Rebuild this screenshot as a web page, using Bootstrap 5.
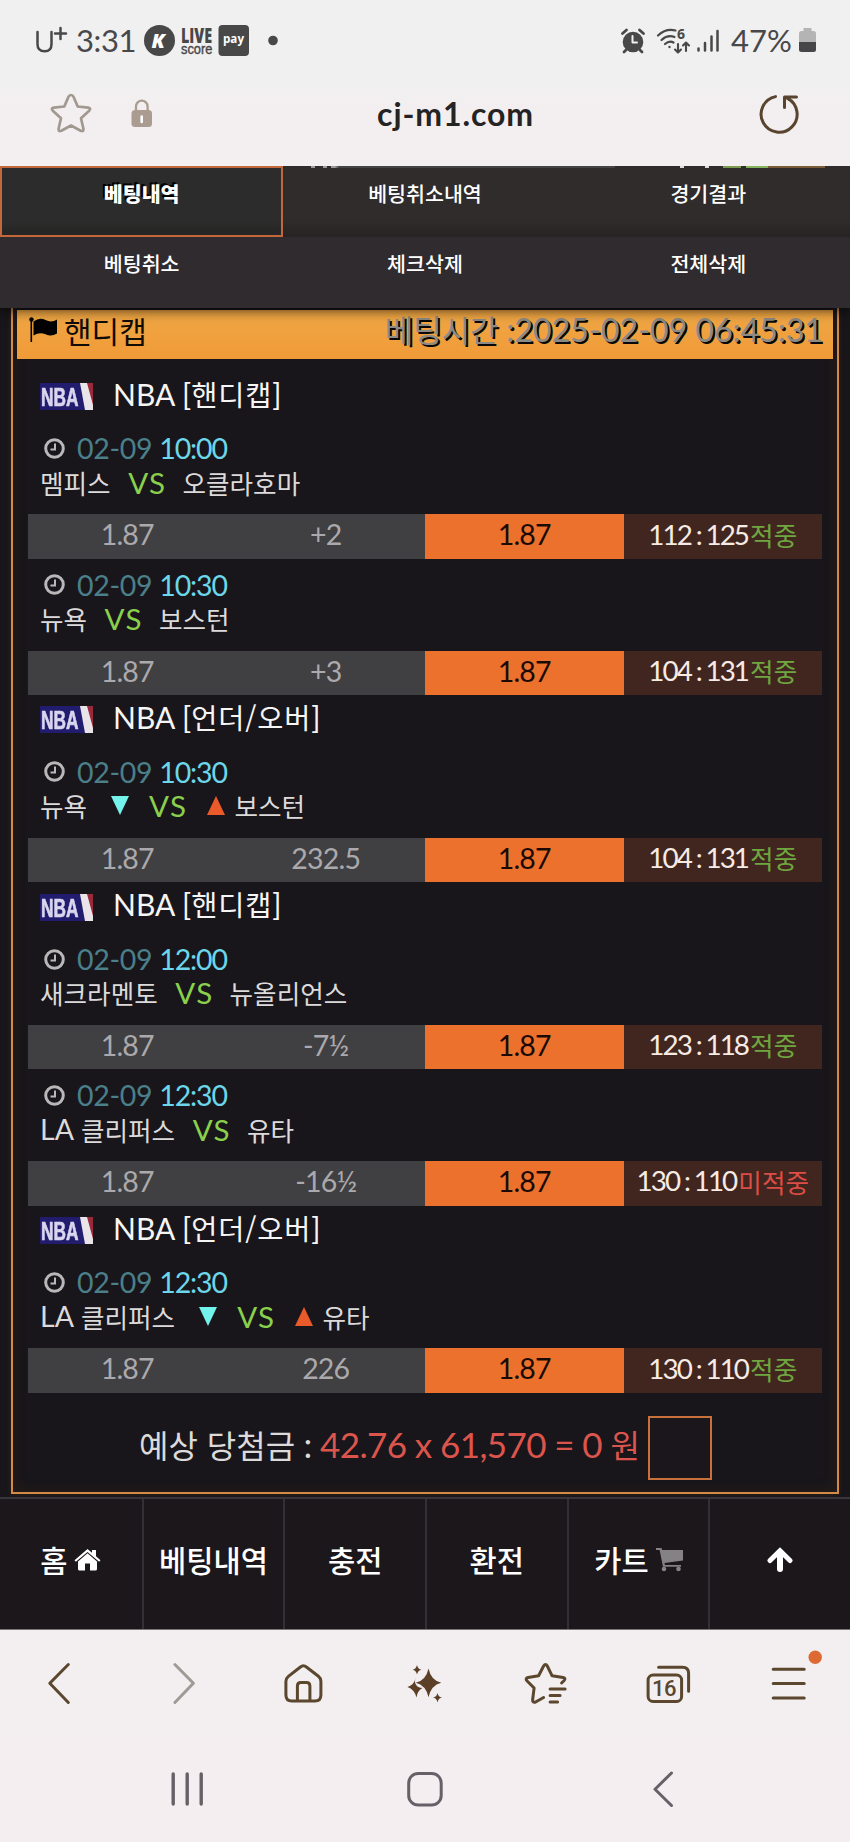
<!DOCTYPE html>
<html lang="ko">
<head>
<meta charset="utf-8">
<meta name="viewport" content="width=device-width, initial-scale=1">
<title>베팅내역</title>
<link href="https://cdn.jsdelivr.net/npm/bootstrap@5.3.0/dist/css/bootstrap.min.css" rel="stylesheet">
<style>
body{font-family:Lato,"Noto Sans CJK KR",sans-serif;background:#18161a;color:#ddd;width:850px;height:1842px;overflow:hidden;line-height:1;white-space:nowrap}
svg{display:block;flex:none}
.ko{font-family:"Noto Sans CJK KR",sans-serif}
.status{height:80px;background:#f0f0f0;color:#48484a;font-size:31px;padding-left:35px}
.status .clock{width:65px;margin-left:8px;letter-spacing:-.4px}
.urlbar{height:86px;background:linear-gradient(#f0f0f0,#f3eff0 30%);padding-bottom:18px;padding-left:45px}
.urlbar .host{font-size:32px;font-weight:700;color:#252324;letter-spacing:.9px}
.tabs{height:142px;background:#302b2f;box-shadow:0 2px 12px rgba(0,0,0,.75);clip-path:inset(0 0 -20px 0);z-index:2}
.tabs .cell{height:71px;font-size:20.6px;font-weight:500;color:#fff;line-height:29px;padding-top:12px}
.tabs .top{background:linear-gradient(#2f2c2b 75%,#272324);padding-top:13px}
.tabs .on{background:linear-gradient(#2b2c2b 80%,#262424);border:2px solid #c2683a;font-weight:900;text-shadow:-2px -2px 0 #000;padding-top:11px}
.peek{top:0;left:285px;width:565px;height:2px;background:linear-gradient(90deg,transparent 26px,#999 26px 30px,transparent 30px 38px,#999 38px 42px,transparent 42px 46px,#999 46px 50px,#444 54px 330px,transparent 330px 395px,#ddd 395px 399px,transparent 399px 420px,#ddd 420px 424px,transparent 424px 438px,#7b9b50 438px 456px,transparent 456px 461px,#83b45c 461px 483px,#7b5c38 483px 540px,transparent 540px)}
.slip{margin:-10px 11px 0;border:2px solid #d18a48;height:1196px;padding:10px 4px 0;box-shadow:inset 0 0 14px rgba(120,60,10,.18),0 0 5px rgba(120,60,10,.3)}
.slip-head{height:49px;background:linear-gradient(#f0a845,#f09a38);color:#120c06;padding:0 10px 10px 12px}
.slip-head .name{font-size:30px;margin-left:6px}
.slip-head .when{color:#8d8a85;text-shadow:2px 2px 0 #080808;font-size:32.5px;letter-spacing:-.2px}
.when .ko{font-size:31px}
.games{padding:12.6px 11px 0}
.league{height:51px;padding:0 0 7px 12px;color:#f6f5f6;font-size:30px}
.league svg{position:relative;top:3px}
.league .title{margin-left:20px}
.league .ko{font-size:28.4px;letter-spacing:.9px}
.game{height:136.2px;padding-top:9.500px;font-size:28.5px}
.game .date{height:33px;padding-left:16px;color:#4b7f89;letter-spacing:-.3px}
.date b{font-weight:400;color:#6cd6ea;margin-left:7px;letter-spacing:-1.1px}
.date svg{margin-right:12px}
.game .teams{height:33px;margin-top:1px;padding-left:12px;color:#dcdadb;font-size:25.6px;font-family:"Noto Sans CJK KR",sans-serif}
.teams i{font:400 29.5px/1 Lato,sans-serif;color:#8ad04d;margin:0 16px 0 17.5px;letter-spacing:1.4px}
.teams .en{font:400 28.5px/1 Lato,sans-serif;margin-right:7px}
.down{margin-left:24px;margin-right:2.5px}
.up{margin-left:4px;margin-right:9px}
.odds{height:44.4px;margin-top:15.3px;background:#403f42;color:#aba9ac;letter-spacing:-.8px}
.odds > div{width:25%;padding-bottom:4px}
.odds .pick{background:#ec712d;color:#1b0a04}
.odds .score{background:#41261f;color:#f6ebe5;font-size:27.8px;letter-spacing:-1.9px;word-spacing:-.5px}
.score .ko{font-size:25.6px;letter-spacing:0;margin-left:2px}
.hit{color:#6fa63f}.miss{color:#dc4d46}
.total{height:108px;font-size:35px;padding-left:122px;padding-bottom:5px;color:#dcdadb;letter-spacing:-.6px}
.total .ko{font-size:32px;letter-spacing:0}
.total .sum{color:#dc554d;letter-spacing:-.6px}
.total .box{width:64px;height:64px;border:2px solid #c9713d;background:#1a161b;margin:7px 0 0 8px}
.dock{height:133px;margin-top:3px;border-top:2px solid #38363a;border-bottom:1px solid #777;background:#1b171b;font-size:29.6px;font-weight:500;color:#fff}
.dock > div{width:16.6667%;padding-bottom:8px;gap:7px}
.dock > div:not(:first-child){border-left:2px solid #323034}
.toolbar{height:105px;background:#f3eff1}
.toolbar svg{overflow:visible}
.toolbar > div{width:14.2857%}
.sysnav{height:108px;background:#f4eef1;padding:0 68px}
.sysnav > div{width:33.333%}
.ln{fill:none;stroke-linecap:round;stroke-linejoin:round}
</style>
</head>
<body>
<svg width="0" height="0" class="position-absolute">
  <defs>
    <filter id="soft"><feGaussianBlur stdDeviation=".6"/></filter>
    <g id="nba">
      <rect width="53" height="27" fill="#211c6e"/>
      <g filter="url(#soft)">
        <path d="M40 0h13v27h-8z" fill="#e9e3ea"/><path d="M47 0h6v22z" fill="#9a2b3a"/>
        <text transform="translate(1 23) scale(.72 1)" textLength="52" lengthAdjust="spacingAndGlyphs" font-family="Liberation Sans" font-weight="700" font-size="25" fill="#d9d6ee" stroke="#d9d6ee" stroke-width=".7">NBA</text>
      </g>
    </g>
    <g id="clk" fill="none" stroke="#b9b8b9"><circle cx="10.5" cy="10.5" r="8.8" stroke-width="3"/><path d="M11 5.5v6H6.500" stroke-width="2"/></g>
  </defs>
</svg>

<header>
  <div class="status d-flex align-items-center">
    <svg width="33" height="34" viewBox="35 22 33 34" class="ln" stroke="#48484a"><path d="M37.500 31v12c0 5 3 7.300 7.200 7.300s6.800-2.300 6.800-7.300V31M60.500 27v11M55 32.500h11" stroke-width="2.500"/></svg>
    <span class="clock">3:31</span>
    <svg width="140" height="48" viewBox="141 15 140 48">
      <circle cx="159.500" cy="39.500" r="15.500" fill="#484849"/>
      <text x="151.500" y="46.500" font-family="Open Sans" font-weight="800" font-style="italic" font-size="20" fill="#fff">K</text>
      <text transform="translate(181 41.500) scale(.65 1)" textLength="48" lengthAdjust="spacingAndGlyphs" font-family="Open Sans" font-weight="800" font-size="21.500" fill="#484849">LIVE</text>
      <text transform="translate(181 52.500) scale(.92 1)" textLength="34" lengthAdjust="spacingAndGlyphs" font-family="Liberation Sans" font-size="14" fill="#484849" stroke="#484849" stroke-width=".4">score</text>
      <rect x="218.500" y="24" width="30.500" height="31" rx="4" fill="#484849"/>
      <text x="223" y="42" textLength="21" lengthAdjust="spacingAndGlyphs" font-family="Open Sans" font-weight="700" font-size="13" fill="#fff">pay</text>
      <circle cx="273" cy="39.500" r="4.800" fill="#484849"/>
    </svg>
    <svg width="104" height="30" viewBox="619 24 104 30" class="ms-auto" fill="#484849" stroke="#484849">
      <circle cx="633" cy="41" r="10.300" stroke="none"/><path class="ln" d="M622.500 32.500l4-3.500M643.500 32.500l-4-3.500M626 49l-2 2M640 49l2 2" stroke-width="2.800"/><path class="ln" d="M632.500 35v6.500h4.500" stroke="#f0f0f0" stroke-width="2"/>
      <path class="ln" stroke-width="2.200" d="M658 34.500q8-7.500 17.500-5M661.500 39q6-5.500 13-3M665 43q4.500-4 8.500-1.500"/><circle cx="669.500" cy="46" r="1.200" stroke="none"/>
      <path class="ln" stroke-width="2.100" d="M678 43v8M675 48.500l3 3 3-3M686 50v-8M683 44.500l3-3 3 3"/>
      <text x="677" y="38" font-family="Open Sans" font-weight="700" font-size="14" stroke="none">6</text>
      <path class="ln" stroke-width="2.500" d="M698.500 47.500v2M705 42v7.500M711.500 35.500v14M717.500 30v19.500"/>
    </svg>
    <span style="margin-left:8px;width:68px">47%</span>
    <svg width="17" height="26" viewBox="0 0 17 26" style="margin-right:34px"><path d="M4.500 1h8v3h2q2.500 0 2.500 2.500V16H0V6.500Q0 4 2.500 4h2z" fill="#b5b4b5"/><path d="M0 15h17v7.500q0 2.500-2.500 2.500h-12Q0 25 0 22.500z" fill="#464547"/></svg>
  </div>
  <div class="urlbar d-flex align-items-center">
    <svg width="112" height="50" viewBox="45 89 112 50" class="ln">
      <path d="M71 95q1.700 0 2.500 1.800l4.200 9.700 10.500 1.100q3.300.6 1 3.100l-8.200 7.500 2.400 10.500q.3 3.300-2.700 2L71 125.500l-9.700 5.200q-3 1.300-2.700-2l2.400-10.500-8.200-7.500q-2.300-2.500 1-3.100l10.500-1.100 4.200-9.700Q69.300 95 71 95z" stroke="#a1998f" stroke-width="2.700"/>
      <rect x="131.500" y="110" width="20.500" height="17" rx="3.500" fill="#aa9c90"/><path d="M136 111v-4.500a5.800 5.800 0 0 1 11.600 0v4.500" stroke="#aa9c90" stroke-width="2.300"/><path d="M141.700 116.500v5.500" stroke="#fff" stroke-width="2.600"/>
    </svg>
    <span class="host mx-auto">cj-m1.com</span>
    <svg width="50" height="50" viewBox="754 88 50 50" class="ln" style="margin-right:46px" stroke="#59452f" stroke-width="3"><path d="M775.500 95.600a18 18 0 1 0 12 1.700M784.500 106.500V96h12"/></svg>
  </div>
</header>

<nav class="tabs ko position-relative">
  <div class="peek position-absolute"></div>
  <div class="row g-0 text-center">
    <div class="col-4 cell on">베팅내역</div><div class="col-4 cell top">베팅취소내역</div><div class="col-4 cell top">경기결과</div>
    <div class="col-4 cell">베팅취소</div><div class="col-4 cell">체크삭제</div><div class="col-4 cell">전체삭제</div>
  </div>
</nav>

<main class="slip">
  <div class="slip-head d-flex align-items-center">
    <svg width="29" height="26" viewBox="0 0 29 26"><circle cx="2.500" cy="2.500" r="2.200"/><path d="M1.500 2h1.600v23H1.500zM4.500 4.500q6-4.500 12-1.500t11.500-.5v14q-5.500 3.500-11.500.800t-12 1.200z"/></svg>
    <span class="name ko">핸디캡</span>
    <span class="when ms-auto"><span class="ko">베팅시간</span> :2025-02-09 06:45:31</span>
  </div>

  <div class="games">
    <div class="league d-flex align-items-center"><svg width="53" height="27"><use href="#nba"/></svg><span class="title">NBA [<span class="ko">핸디캡</span>]</span></div>
    <div class="game">
      <div class="date d-flex align-items-center"><svg width="21" height="21"><use href="#clk"/></svg>02-09<b>10:00</b></div>
      <div class="teams d-flex align-items-center">멤피스<i>VS</i>오클라호마</div>
      <div class="odds d-flex text-center align-items-stretch"><div class="d-flex align-items-center justify-content-center">1.87</div><div class="d-flex align-items-center justify-content-center">+2</div><div class="pick d-flex align-items-center justify-content-center">1.87</div><div class="score d-flex align-items-center justify-content-center">112 : 125<span class="ko hit">적중</span></div></div>
    </div>
    <div class="game">
      <div class="date d-flex align-items-center"><svg width="21" height="21"><use href="#clk"/></svg>02-09<b>10:30</b></div>
      <div class="teams d-flex align-items-center">뉴욕<i>VS</i>보스턴</div>
      <div class="odds d-flex text-center align-items-stretch"><div class="d-flex align-items-center justify-content-center">1.87</div><div class="d-flex align-items-center justify-content-center">+3</div><div class="pick d-flex align-items-center justify-content-center">1.87</div><div class="score d-flex align-items-center justify-content-center">104 : 131<span class="ko hit">적중</span></div></div>
    </div>

    <div class="league d-flex align-items-center"><svg width="53" height="27"><use href="#nba"/></svg><span class="title">NBA [<span class="ko">언더/오버</span>]</span></div>
    <div class="game">
      <div class="date d-flex align-items-center"><svg width="21" height="21"><use href="#clk"/></svg>02-09<b>10:30</b></div>
      <div class="teams d-flex align-items-center">뉴욕<svg class="down" width="18" height="19"><path d="M0 0h18L9 19z" fill="#74f2ec"/></svg><i>VS</i><svg class="up" width="18" height="19"><path d="M9 0l9 19H0z" fill="#ea5a2a"/></svg>보스턴</div>
      <div class="odds d-flex text-center align-items-stretch"><div class="d-flex align-items-center justify-content-center">1.87</div><div class="d-flex align-items-center justify-content-center">232.5</div><div class="pick d-flex align-items-center justify-content-center">1.87</div><div class="score d-flex align-items-center justify-content-center">104 : 131<span class="ko hit">적중</span></div></div>
    </div>

    <div class="league d-flex align-items-center"><svg width="53" height="27"><use href="#nba"/></svg><span class="title">NBA [<span class="ko">핸디캡</span>]</span></div>
    <div class="game">
      <div class="date d-flex align-items-center"><svg width="21" height="21"><use href="#clk"/></svg>02-09<b>12:00</b></div>
      <div class="teams d-flex align-items-center">새크라멘토<i>VS</i>뉴올리언스</div>
      <div class="odds d-flex text-center align-items-stretch"><div class="d-flex align-items-center justify-content-center">1.87</div><div class="d-flex align-items-center justify-content-center">-7½</div><div class="pick d-flex align-items-center justify-content-center">1.87</div><div class="score d-flex align-items-center justify-content-center">123 : 118<span class="ko hit">적중</span></div></div>
    </div>
    <div class="game">
      <div class="date d-flex align-items-center"><svg width="21" height="21"><use href="#clk"/></svg>02-09<b>12:30</b></div>
      <div class="teams d-flex align-items-center"><span class="en">LA</span>클리퍼스<i>VS</i>유타</div>
      <div class="odds d-flex text-center align-items-stretch"><div class="d-flex align-items-center justify-content-center">1.87</div><div class="d-flex align-items-center justify-content-center">-16½</div><div class="pick d-flex align-items-center justify-content-center">1.87</div><div class="score d-flex align-items-center justify-content-center">130 : 110<span class="ko miss">미적중</span></div></div>
    </div>

    <div class="league d-flex align-items-center"><svg width="53" height="27"><use href="#nba"/></svg><span class="title">NBA [<span class="ko">언더/오버</span>]</span></div>
    <div class="game">
      <div class="date d-flex align-items-center"><svg width="21" height="21"><use href="#clk"/></svg>02-09<b>12:30</b></div>
      <div class="teams d-flex align-items-center"><span class="en">LA</span>클리퍼스<svg class="down" width="18" height="19"><path d="M0 0h18L9 19z" fill="#74f2ec"/></svg><i>VS</i><svg class="up" width="18" height="19"><path d="M9 0l9 19H0z" fill="#ea5a2a"/></svg>유타</div>
      <div class="odds d-flex text-center align-items-stretch"><div class="d-flex align-items-center justify-content-center">1.87</div><div class="d-flex align-items-center justify-content-center">226</div><div class="pick d-flex align-items-center justify-content-center">1.87</div><div class="score d-flex align-items-center justify-content-center">130 : 110<span class="ko hit">적중</span></div></div>
    </div>
  </div>

  <div class="total d-flex align-items-center">
    <span><span class="ko">예상 당첨금</span> : <span class="sum">42.76 x 61,570 = 0 <span class="ko">원</span></span></span>
    <span class="box"></span>
  </div>
</main>

<nav class="dock ko d-flex">
  <div class="d-flex align-items-center justify-content-center">홈 <svg width="27" height="22" viewBox="0 0 27 22" fill="#fff"><path d="M13.500 0L18 3.800V1h4v6.200l4.500 4-1.400 1.600L13.500 2.900 1.900 12.800.5 11.200z"/><path d="M4 12.500l9.500-8.200L23 12.500V20q0 1.500-1.500 1.500H16v-7h-5v7H5.500Q4 21.500 4 20z"/></svg></div>
  <div class="d-flex align-items-center justify-content-center">베팅내역</div>
  <div class="d-flex align-items-center justify-content-center">충전</div>
  <div class="d-flex align-items-center justify-content-center">환전</div>
  <div class="d-flex align-items-center justify-content-center">카트 <svg width="27" height="24" viewBox="0 0 27 24" fill="#858286"><path d="M0 0h5.500l.6 2H27v10.500L8.500 15l.4 2H25v1.800H7L3.600 2H0z"/><circle cx="8" cy="21" r="2.300"/><circle cx="22.500" cy="21" r="2.300"/></svg></div>
  <div class="d-flex align-items-center justify-content-center"><svg width="26" height="26" viewBox="0 0 26 26" class="ln" stroke="#fff"><path d="M13 22V5" stroke-width="6"/><path d="M3 13.500L13 3.800l10 9.700" stroke-width="5" stroke-linejoin="miter"/></svg></div>
</nav>

<footer>
  <div class="toolbar d-flex align-items-center ln" style="stroke:#5b462e;stroke-width:3">
    <div><svg class="mx-auto" width="60" height="80" viewBox="30.700 1642 60 80"><path d="M68 1663.500L49.500 1682.300 68 1701.500"/></svg></div>
    <div><svg class="mx-auto" width="60" height="80" viewBox="152.100 1642 60 80" stroke="#a09a96"><path d="M175 1663.500l18.500 18.800-18.500 19.200"/></svg></div>
    <div><svg class="mx-auto" width="60" height="80" viewBox="273.600 1642 60 80"><path d="M300 1666q3-2.500 6 0l12 9.300q2.500 2 2.500 5V1694q0 6-6 6h-23q-6 0-6-6v-13.700q0-3 2.500-5zM297 1699.500V1685q0-3.500 3.500-3.500h5.500q3.500 0 3.500 3.500v14.500"/></svg></div>
    <div><svg class="mx-auto" width="60" height="80" viewBox="395 1642 60 80" fill="#5b4027" stroke="none"><path d="M428.500 1667.500q2.500 12 12.800 14.300-10.300 2.500-12.800 14.500-2.500-12-12.800-14.500 10.300-2.300 12.800-14.300zM416.500 1676q-2 3.500-1.500 5 .5 5.500 7.500 6-5 2.500-6 9.500-2-8-9-10.500 6-2 7.500-7zM417 1664q.8 4.200 4.500 4.800-3.700.8-4.500 4.800-.8-4-4.500-4.800 3.700-.6 4.500-4.800zM437.500 1692q.8 4 4.500 4.600-3.700.8-4.500 4.800-.8-4-4.500-4.800 3.700-.6 4.500-4.600z"/></svg></div>
    <div><svg class="mx-auto" width="60" height="80" viewBox="516.400 1642 60 80"><path d="M562 1682l2.800-2.800q1.500-2-1.300-2.800l-11-1.600-4.800-9.800q-1.700-3-3.700 0l-5 9.800-10.500 1.700q-3.200.8-1.200 3.200l7.200 7.300-1.500 12q0 3.200 3 2l8-4.500M550.500 1688h15M550.500 1694.500h10M550.500 1701h7.500"/></svg></div>
    <div><svg class="mx-auto" width="60" height="80" viewBox="637.900 1642 60 80"><rect x="648" y="1674" width="33.500" height="26.500" rx="5"/><path d="M658.500 1666.300h24q6 0 6 6v18"/><text x="652" y="1695" textLength="24.500" font-family="Roboto" font-weight="500" font-size="22" fill="#5b462e" stroke="none">16</text></svg></div>
    <div><svg class="mx-auto" width="60" height="80" viewBox="759.300 1642 60 80"><path d="M773.500 1668.200h31M773.500 1682.500h31M773.500 1697h31"/><circle cx="815.500" cy="1656.300" r="6.700" fill="#dd6a33" stroke="none"/></svg></div>
  </div>
  <div class="sysnav d-flex align-items-center ln" style="stroke:#666167;stroke-width:3">
    <div><svg class="mx-auto" width="60" height="60" viewBox="156.500 1758.500 60 60"><path d="M172.700 1773.500v30M186.700 1773.500v30M200.700 1773.500v30" stroke-width="3.400"/></svg></div>
    <div><svg class="mx-auto" width="60" height="60" viewBox="394.300 1758.500 60 60"><rect x="408" y="1773" width="32.500" height="31.500" rx="9.500"/></svg></div>
    <div><svg class="mx-auto" width="60" height="60" viewBox="632 1758.500 60 60"><path d="M670.500 1772.500L654 1788.700l16.500 16.300"/></svg></div>
  </div>
</footer>
<script src="https://cdn.jsdelivr.net/npm/bootstrap@5.3.0/dist/js/bootstrap.bundle.min.js"></script>
</body>
</html>
